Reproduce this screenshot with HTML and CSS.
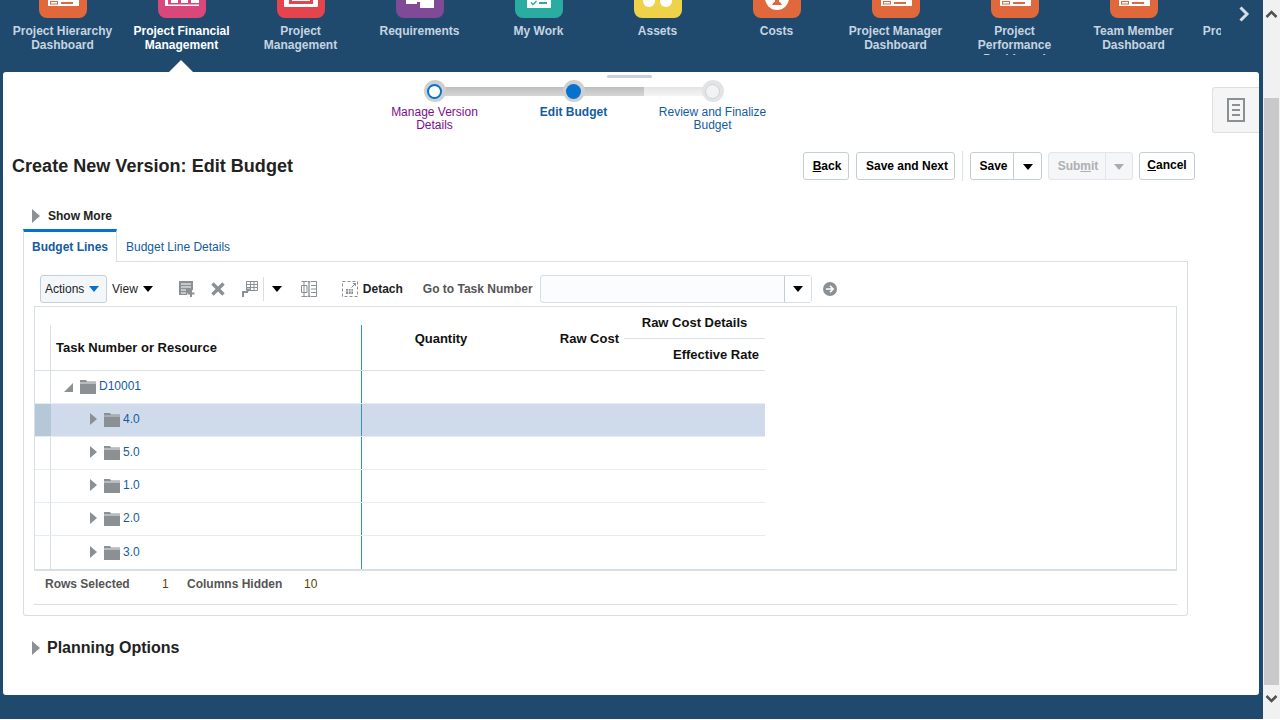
FILE: index.html
```html
<!DOCTYPE html>
<html lang="en">
<head>
  <meta charset="UTF-8" />
  <title>Create New Version: Edit Budget</title>
  <link rel="stylesheet" href="styles.css">
</head>
<body>

  <div class="app">
    <div class="main">

      <!-- springboard strip -->
      <header class="header">
        <nav class="nav">
          <a class="nav-item">
            <span class="tile tile-orange"><svg width="48" height="18" viewBox="0 0 48 18"><rect x="9" y="-2" width="31" height="8" fill="#fff"/><rect x="11.5" y="1.5" width="7" height="2.5" fill="none" stroke="#e0683a"/><rect x="22" y="2" width="12" height="2" fill="#e0683a"/></svg></span>
            <span class="nav-label">Project Hierarchy Dashboard</span>
          </a>
          <a class="nav-item active">
            <span class="tile tile-pink"><svg width="48" height="18" viewBox="0 0 48 18"><rect x="7" y="-2" width="34" height="8" fill="#fff"/><rect x="10" y="-2" width="3" height="6" fill="#d9487b"/><rect x="20" y="-2" width="3" height="6" fill="#d9487b"/><rect x="30" y="-2" width="3" height="6" fill="#d9487b"/><rect x="10" y="3" width="31" height="1.5" fill="#d9487b"/></svg></span>
            <span class="nav-label">Project Financial Management</span>
          </a>
          <a class="nav-item">
            <span class="tile tile-red"><svg width="48" height="18" viewBox="0 0 48 18"><rect x="7" y="-2" width="34" height="9" rx="1" fill="#fff"/><rect x="12" y="-2" width="24" height="6" fill="#e5444f"/><rect x="15" y="-2" width="18" height="3" fill="#fff"/></svg></span>
            <span class="nav-label">Project Management</span>
          </a>
          <a class="nav-item">
            <span class="tile tile-purple"><svg width="48" height="18" viewBox="0 0 48 18"><rect x="10" y="-2" width="11" height="6" fill="#fff"/><rect x="24" y="-2" width="14" height="10" fill="#fff"/><rect x="21" y="0" width="3" height="2" fill="#fff"/></svg></span>
            <span class="nav-label">Requirements</span>
          </a>
          <a class="nav-item">
            <span class="tile tile-teal"><svg width="48" height="18" viewBox="0 0 48 18"><rect x="12" y="-2" width="24" height="10" fill="#fff"/><path d="M16 2.5l2 2 3.5-3.5" fill="none" stroke="#2aaca0" stroke-width="1.5"/><rect x="24" y="2" width="8" height="2" fill="#2aaca0"/></svg></span>
            <span class="nav-label">My Work</span>
          </a>
          <a class="nav-item">
            <span class="tile tile-yellow"><svg width="48" height="18" viewBox="0 0 48 18"><circle cx="15" cy="1" r="6" fill="#fff"/><circle cx="32" cy="1" r="6" fill="#fff"/></svg></span>
            <span class="nav-label">Assets</span>
          </a>
          <a class="nav-item">
            <span class="tile tile-orange"><svg width="48" height="18" viewBox="0 0 48 18"><circle cx="24" cy="-2" r="12" fill="#fff"/><path d="M19 5l2-3h1V0h4v2h1l2 3z" fill="#e0683a"/></svg></span>
            <span class="nav-label">Costs</span>
          </a>
          <a class="nav-item">
            <span class="tile tile-orange"><svg width="48" height="18" viewBox="0 0 48 18"><rect x="9" y="-2" width="31" height="8" fill="#fff"/><rect x="11.5" y="1.5" width="7" height="2.5" fill="none" stroke="#e0683a"/><rect x="22" y="2" width="12" height="2" fill="#e0683a"/></svg></span>
            <span class="nav-label">Project Manager Dashboard</span>
          </a>
          <a class="nav-item">
            <span class="tile tile-orange"><svg width="48" height="18" viewBox="0 0 48 18"><rect x="9" y="-2" width="31" height="8" fill="#fff"/><rect x="11.5" y="1.5" width="7" height="2.5" fill="none" stroke="#e0683a"/><rect x="22" y="2" width="12" height="2" fill="#e0683a"/></svg></span>
            <span class="nav-label">Project Performance Dashboard</span>
          </a>
          <a class="nav-item">
            <span class="tile tile-orange"><svg width="48" height="18" viewBox="0 0 48 18"><rect x="9" y="-2" width="31" height="8" fill="#fff"/><rect x="11.5" y="1.5" width="7" height="2.5" fill="none" stroke="#e0683a"/><rect x="22" y="2" width="12" height="2" fill="#e0683a"/></svg></span>
            <span class="nav-label">Team Member Dashboard</span>
          </a>
          <a class="nav-item">
            <span class="tile tile-none"></span>
            <span class="nav-label">Project Hierarchy Dashboard</span>
          </a>
        </nav>
        <svg class="nav-next" width="12" height="16" viewBox="0 0 12 16"><path d="M2.5 1.5L9 8l-6.5 6.5" fill="none" stroke="#d5dde5" stroke-width="3"/></svg>
        <span class="nav-pointer"></span>
      </header>

      <div class="panel">
        <span class="grip"></span>

        <aside class="side-tab">
          <svg width="18" height="24" viewBox="0 0 18 24"><rect x="1" y="1" width="16" height="22" fill="none" stroke="#8b9094" stroke-width="2"/><path d="M5 7h8M5 12h8M5 17h8" stroke="#8b9094" stroke-width="2"/></svg>
        </aside>

        <!-- train stops -->
        <div class="train">
          <div class="train-track"><span class="train-done"></span></div>
          <div class="stop">
            <span class="stop-dot"><span class="dot-visited"></span></span>
            <span class="stop-label visited">Manage Version Details</span>
          </div>
          <div class="stop">
            <span class="stop-dot"><span class="dot-current"></span></span>
            <span class="stop-label current">Edit Budget</span>
          </div>
          <div class="stop">
            <span class="stop-dot stop-dot-next"><span class="dot-next"></span></span>
            <span class="stop-label">Review and Finalize Budget</span>
          </div>
        </div>

        <div class="page-head">
          <h1 class="page-title">Create New Version: Edit Budget</h1>
          <div class="actions">
            <button class="btn btn-back"><u>B</u>ack</button>
            <button class="btn btn-next">Save and Next</button>
            <span class="actions-sep"></span>
            <div class="split">
              <button class="btn-part btn-save">Save</button>
              <button class="btn-part btn-drop"><span class="caret caret-black"></span></button>
            </div>
            <div class="split split-off">
              <button class="btn-part btn-submit">Sub<u>m</u>it</button>
              <button class="btn-part btn-drop-off"><span class="caret caret-off"></span></button>
            </div>
            <button class="btn btn-cancel"><u>C</u>ancel</button>
          </div>
        </div>

        <div class="show-more"><span class="disclose"></span>Show More</div>

        <div class="tabs">
          <a class="tab tab-on">Budget Lines</a>
          <a class="tab">Budget Line Details</a>
        </div>

        <section class="tab-body">
          <div class="toolbar">
            <button class="tb-actions">Actions<span class="caret caret-blue"></span></button>
            <span class="tb-view">View<span class="caret caret-black"></span></span>

            <svg class="ic ic-add" width="16" height="16" viewBox="0 0 16 16"><path d="M0 0h14v9h-3v3H8v2H0z" fill="#8b9094"/><path d="M2 3h10M2 6h10M2 9h5M2 12h5" stroke="#fff"/><path d="M12 9v7M8.500 12.500h7" stroke="#8b9094" stroke-width="2"/></svg>
            <svg class="ic ic-del" width="14" height="14" viewBox="0 0 14 14"><path d="M1.500 1.500l11 11M12.500 1.500l-11 11" stroke="#8b9094" stroke-width="3.400"/></svg>
            <svg class="ic ic-freeze" width="16" height="16" viewBox="0 0 16 16"><path d="M4.500.5h11v9h-11zM4.500 3.500h11M4.500 6.500h11M8.500.5v9M12 .5v9" fill="none" stroke="#8b9094"/><path d="M1 16v-5h5" fill="none" stroke="#8b9094" stroke-width="2"/><path d="M4 7.500h4.500L6 11z" fill="#8b9094"/></svg>
            <span class="tb-sep"></span>
            <span class="caret caret-black tb-more"></span>
            <svg class="ic ic-wrap" width="16" height="16" viewBox="0 0 16 16"><path d="M.5.500h5.500M.5 15.500h5.500M3 .5v15M.5 4.500H6v7H.5zM10 .5h5.500v15H10M10 4.500h5.500M10 8h5.500M10 11.500h5.500" fill="none" stroke="#8b9094"/><path d="M7 0h2v16H7z" fill="#fff"/><path d="M6.500.5h3M6.500 15.500h3M8 .5v15" fill="none" stroke="#8b9094" stroke-width="1.300"/></svg>
            <svg class="ic ic-detach" width="16" height="16" viewBox="0 0 16 16"><rect x=".5" y=".5" width="15" height="15" fill="none" stroke="#8b9094" stroke-dasharray="3 2"/><path d="M4 8h7v5H4z" fill="#8b9094"/><path d="M4 10h7M6.500 8v5M9 8v5" stroke="#fff" stroke-width=".7"/><path d="M9.500 6.500l4-4M11 2.500h2.500V5" fill="none" stroke="#8b9094"/></svg>
            <span class="tb-detach">Detach</span>

            <span class="tb-goto">Go to Task Number</span>
            <div class="combo">
              <span class="combo-field"></span>
              <span class="combo-drop"><span class="caret caret-black"></span></span>
            </div>
            <svg class="ic ic-go" width="14" height="14" viewBox="0 0 14 14"><circle cx="7" cy="7" r="7" fill="#8b9094"/><path d="M3 7h7M7 3.800L10.200 7 7 10.200" fill="none" stroke="#fff" stroke-width="1.600"/></svg>
          </div>

          <div class="grid-frame">
            <div class="grid-head">
              <div class="head-rowhead"></div>
              <div class="head-tree">Task Number or Resource</div>
              <div class="head-cols">
                <div class="head-qty">Quantity</div>
                <div class="head-raw">Raw Cost</div>
                <div class="head-group">
                  <div class="group-title">Raw Cost Details</div>
                  <div class="group-sub">Effective Rate</div>
                </div>
              </div>
            </div>

            <div class="grid-row">
              <div class="row-head"></div>
              <div class="row-tree">
                <span class="twisty-open"></span>
                <svg class="folder" width="16" height="14" viewBox="0 0 16 14"><path d="M0 2V0h6l1 1.500h9V14H0z" fill="#8b9094"/><path d="M0 3h16" stroke="#fff" stroke-width=".8"/></svg>
                <a class="node">D10001</a>
              </div>
              <div class="row-rest"></div>
            </div>
            <div class="grid-row row-sel">
              <div class="row-head"></div>
              <div class="row-tree child">
                <span class="twisty"></span>
                <svg class="folder" width="16" height="14" viewBox="0 0 16 14"><path d="M0 2V0h6l1 1.500h9V14H0z" fill="#8b9094"/><path d="M0 3h16" stroke="#cfdbeb" stroke-width=".8"/></svg>
                <a class="node">4.0</a>
              </div>
              <div class="row-rest"></div>
            </div>
            <div class="grid-row">
              <div class="row-head"></div>
              <div class="row-tree child">
                <span class="twisty"></span>
                <svg class="folder" width="16" height="14" viewBox="0 0 16 14"><path d="M0 2V0h6l1 1.500h9V14H0z" fill="#8b9094"/><path d="M0 3h16" stroke="#fff" stroke-width=".8"/></svg>
                <a class="node">5.0</a>
              </div>
              <div class="row-rest"></div>
            </div>
            <div class="grid-row">
              <div class="row-head"></div>
              <div class="row-tree child">
                <span class="twisty"></span>
                <svg class="folder" width="16" height="14" viewBox="0 0 16 14"><path d="M0 2V0h6l1 1.500h9V14H0z" fill="#8b9094"/><path d="M0 3h16" stroke="#fff" stroke-width=".8"/></svg>
                <a class="node">1.0</a>
              </div>
              <div class="row-rest"></div>
            </div>
            <div class="grid-row">
              <div class="row-head"></div>
              <div class="row-tree child">
                <span class="twisty"></span>
                <svg class="folder" width="16" height="14" viewBox="0 0 16 14"><path d="M0 2V0h6l1 1.500h9V14H0z" fill="#8b9094"/><path d="M0 3h16" stroke="#fff" stroke-width=".8"/></svg>
                <a class="node">2.0</a>
              </div>
              <div class="row-rest"></div>
            </div>
            <div class="grid-row">
              <div class="row-head"></div>
              <div class="row-tree child">
                <span class="twisty"></span>
                <svg class="folder" width="16" height="14" viewBox="0 0 16 14"><path d="M0 2V0h6l1 1.500h9V14H0z" fill="#8b9094"/><path d="M0 3h16" stroke="#fff" stroke-width=".8"/></svg>
                <a class="node">3.0</a>
              </div>
              <div class="row-rest"></div>
            </div>
          </div>

          <div class="status">
            <span class="status-label status-rows">Rows Selected</span>
            <span class="status-value status-one">1</span>
            <span class="status-label status-cols">Columns Hidden</span>
            <span class="status-value">10</span>
          </div>
        </section>

        <div class="planning"><span class="disclose"></span>Planning Options</div>
      </div>
    </div>

    <div class="scrollbar">
      <svg class="scroll-arrow" width="13" height="8" viewBox="0 0 13 8"><path d="M1.500 7l5-5 5 5" fill="none" stroke="#505050" stroke-width="2.500"/></svg>
      <div class="scroll-thumb"></div>
      <svg class="scroll-arrow" width="13" height="8" viewBox="0 0 13 8"><path d="M1.500 1l5 5 5-5" fill="none" stroke="#505050" stroke-width="2.500"/></svg>
    </div>
  </div>

</body>
</html>
```

FILE: styles.css
```css
* {
  box-sizing: border-box;
}

body {
  margin: 0;
  padding: 0;
  background-color: #fff;
  font-family: "Liberation Sans", Arial, sans-serif;
  font-size: 12px;
  color: #222;
  overflow: hidden;
}

.app {
  display: flex;
  height: 719px;
}

.main {
  width: 1263px;
  background-color: #1f4a6e;
}

/* header */

.header {
  position: relative;
  height: 72px;
  padding-left: 3px;
}

.nav {
  display: flex;
  width: 1218px;
  height: 55px;
  overflow: hidden;
}

.nav-item {
  flex: 0 0 119px;
  display: flex;
  flex-direction: column;
  align-items: center;
  padding: 0 7px;
  color: #c6d4e0;
  font-weight: bold;
  line-height: 14px;
  text-align: center;
}

.nav-item.active {
  color: #fff;
}

.tile {
  display: block;
  flex: none;
  width: 48px;
  height: 18px;
  margin-bottom: 6px;
  border-radius: 0 0 8px 8px;
  overflow: hidden;
}

.tile svg {
  display: block;
}

.tile-orange { background-color: #e0683a; }
.tile-pink { background-color: #d9487b; }
.tile-red { background-color: #e5444f; }
.tile-purple { background-color: #7f4a96; }
.tile-teal { background-color: #2aaca0; }
.tile-yellow { background-color: #eed24a; }
.tile-none { background: none; }

.nav-next {
  position: absolute;
  top: 6px;
  left: 1238px;
}

.nav-pointer {
  position: absolute;
  left: 169px;
  top: 60px;
  border-left: 12px solid transparent;
  border-right: 12px solid transparent;
  border-bottom: 12px solid #fff;
}

/* panel */

.panel {
  position: relative;
  width: 1256px;
  height: 623px;
  margin-left: 3px;
  background-color: #fff;
  border-radius: 3px;
  overflow: hidden;
}

.grip {
  position: absolute;
  left: 604px;
  top: 3px;
  width: 45px;
  height: 3px;
  border-radius: 2px;
  background-color: #c9d0de;
}

.side-tab {
  position: absolute;
  left: 1209px;
  top: 15px;
  width: 47px;
  height: 46px;
  display: flex;
  align-items: center;
  justify-content: center;
  background-color: #f5f5f5;
  border: 1px solid #dfdfdf;
  border-right: none;
  border-radius: 3px 0 0 3px;
}

/* train */

.train {
  position: relative;
  display: grid;
  grid-template-columns: repeat(3, 139px);
  width: 417px;
  margin-left: 362px;
  padding-top: 8px;
  height: 80px;
}

.train-track {
  position: absolute;
  left: 70px;
  top: 15px;
  width: 278px;
  height: 9px;
  background: linear-gradient(#e4e4e4, #f4f4f4);
}

.train-done {
  display: block;
  width: 209px;
  height: 9px;
  background: linear-gradient(#bdbdbd, #d6d6d6);
}

.stop {
  position: relative;
  display: flex;
  flex-direction: column;
  align-items: center;
}

.stop-dot {
  display: flex;
  align-items: center;
  justify-content: center;
  width: 22px;
  height: 22px;
  border-radius: 50%;
  background-color: #cfcfcf;
}

.stop-dot-next {
  background-color: #e4e4e4;
}

.dot-visited {
  width: 15px;
  height: 15px;
  border-radius: 50%;
  background-color: #fff;
  border: 2px solid #0572ce;
}

.dot-current {
  width: 15px;
  height: 15px;
  border-radius: 50%;
  background-color: #0572ce;
}

.dot-next {
  width: 15px;
  height: 15px;
  border-radius: 50%;
  background-color: #f2f2f2;
  border: 1px solid #c8d4e0;
}

.stop-label {
  width: 112px;
  margin-top: 4px;
  line-height: 13px;
  text-align: center;
  color: #145c9e;
}

.stop-label.visited {
  color: #7a0f8c;
}

.stop-label.current {
  font-weight: bold;
}

/* title row */

.page-head {
  display: flex;
  align-items: center;
  justify-content: space-between;
  height: 28px;
  padding: 0 64px 0 9px;
}

.page-title {
  margin: 0;
  font-size: 18px;
  font-weight: bold;
  letter-spacing: 0.03px;
  color: #222;
}

.actions {
  display: flex;
  align-items: stretch;
  height: 28px;
}

.btn,
.btn-part {
  font-family: inherit;
  font-size: 12px;
  font-weight: bold;
  color: #000;
  background-color: #fff;
  padding: 0;
}

.btn {
  border: 1px solid #c4ced7;
  border-radius: 3px;
}

.btn-back { width: 46px; padding-left: 2px; }
.btn-next { width: 99px; margin-left: 7px; padding-left: 3px; }
.btn-cancel { width: 56px; margin-left: 6px; padding-bottom: 3px; }

.actions-sep {
  width: 1px;
  height: 30px;
  margin: -1px 7px 0 7px;
  background-color: #dde3e8;
}

.split {
  display: flex;
  width: 72px;
  border: 1px solid #c4ced7;
  border-radius: 3px;
}

.split-off {
  width: 85px;
  margin-left: 6px;
  background-color: #f5f6f7;
  border-color: #e2e6ea;
}

.btn-part {
  border: none;
  background: none;
}

.btn-save { width: 43px; padding-left: 3px; border-right: 1px solid #c4ced7; }
.btn-drop { flex: 1; }

.btn-submit {
  width: 57px;
  padding-left: 2px;
  color: #acb0b4;
  border-right: 1px solid #e2e6ea;
}

.btn-drop-off { flex: 1; }

.caret {
  display: inline-block;
  border-left: 5px solid transparent;
  border-right: 5px solid transparent;
  border-top: 6px solid #000;
}

.caret-off { border-top-color: #a9adb1; }
.caret-blue { border-top-color: #0572ce; }

/* disclosure rows */

.show-more {
  display: flex;
  align-items: center;
  height: 20px;
  margin: 26px 0 0 29px;
  font-weight: bold;
  color: #222;
}

.disclose {
  flex: none;
  border-top: 7px solid transparent;
  border-bottom: 7px solid transparent;
  border-left: 8px solid #8b9094;
  margin-right: 8px;
}

.planning {
  display: flex;
  align-items: center;
  height: 24px;
  margin: 20px 0 0 29px;
  font-size: 16px;
  font-weight: bold;
  color: #222;
}

.planning .disclose {
  margin-right: 7px;
}

/* tabs */

.tabs {
  display: flex;
  height: 33px;
  margin: 3px 71px 0 20px;
  border-bottom: 1px solid #d6dfe6;
}

.tab {
  padding: 0 9px;
  height: 33px;
  line-height: 30px;
  border-top: 3px solid transparent;
  color: #145c9e;
}

.tab-on {
  width: 94px;
  font-weight: bold;
  background-color: #fff;
  border-top-color: #0572ce;
  border-left: 1px solid #d6dfe6;
  border-right: 1px solid #d6dfe6;
  padding: 0 8px;
}

.tab-body {
  width: 1165px;
  height: 354px;
  margin-left: 20px;
  padding: 13px 10px 0 10px;
  border: 1px solid #d6dfe6;
  border-top: none;
  border-radius: 0 0 3px 3px;
}

/* toolbar */

.toolbar {
  display: flex;
  align-items: center;
  height: 28px;
  margin: 0 0 3px 6px;
}

.tb-actions {
  display: flex;
  align-items: center;
  width: 67px;
  height: 28px;
  padding: 0 0 0 4px;
  font-family: inherit;
  font-size: 12px;
  color: #222;
  background-color: #f3f7fa;
  border: 1px solid #c4ced7;
  border-radius: 3px;
}

.tb-actions .caret {
  margin-left: 5px;
}

.tb-view {
  display: flex;
  align-items: center;
  margin-left: 5px;
  color: #222;
}

.tb-view .caret {
  margin-left: 5px;
}

.ic {
  flex: none;
}

.ic-add { margin-left: 26px; }
.ic-del { margin-left: 16px; }
.ic-freeze { margin-left: 17px; }

.tb-sep {
  width: 1px;
  height: 24px;
  margin-left: 5px;
  background-color: #d6dfe6;
}

.tb-more { margin-left: 8px; }
.ic-wrap { margin-left: 19px; }
.ic-detach { margin-left: 25px; }

.tb-detach {
  margin-left: 5px;
  font-weight: bold;
  color: #222;
}

.tb-goto {
  margin-left: 20px;
  font-weight: bold;
  color: #555;
}

.combo {
  display: flex;
  width: 272px;
  height: 28px;
  margin-left: 7px;
  border: 1px solid #d6dfe6;
  border-radius: 3px;
  background-color: #fbfcfe;
}

.combo-field {
  flex: 1;
}

.combo-drop {
  display: flex;
  align-items: center;
  justify-content: center;
  width: 27px;
  background-color: #fff;
  border-left: 1px solid #c4ced7;
}

.ic-go { margin-left: 11px; }

/* tree table */

.grid-frame {
  height: 265px;
  border: 1px solid #d6dfe6;
  border-bottom-width: 2px;
}

.grid-head {
  display: flex;
  height: 64px;
  border-bottom: 1px solid #d6dfe6;
  width: 730px;
  font-size: 13px;
  font-weight: bold;
  color: #111;
}

.head-rowhead {
  width: 16px;
  margin-top: 18px;
  border-right: 1px solid #d6dfe6;
}

.head-tree {
  display: flex;
  align-items: center;
  width: 311px;
  margin-top: 18px;
  padding-left: 5px;
  border-right: 1px solid #2e97b8;
}

.head-cols {
  display: flex;
  width: 403px;
}

.head-qty {
  display: flex;
  align-items: center;
  justify-content: center;
  width: 158px;
}

.head-raw {
  display: flex;
  align-items: center;
  justify-content: flex-end;
  width: 104px;
  padding-right: 5px;
}

.head-group {
  width: 141px;
}

.group-title {
  height: 32px;
  line-height: 31px;
  text-align: center;
  border-bottom: 1px solid #d6dfe6;
}

.group-sub {
  line-height: 31px;
  text-align: right;
  padding-right: 6px;
}

.grid-row {
  display: flex;
  height: 33px;
  width: 730px;
  border-bottom: 1px solid #e6ebef;
}

.grid-row:last-child {
  border-bottom: none;
}

.row-head {
  width: 16px;
  border-right: 1px solid #d6dfe6;
}

.row-tree {
  display: flex;
  align-items: center;
  width: 311px;
  padding: 0 0 2px 13px;
  border-right: 1px solid #2e97b8;
}

.row-tree.child {
  padding-left: 39px;
}

.row-rest {
  flex: 1;
}

.row-sel {
  background-color: #cfdbeb;
}

.row-sel .row-head {
  background-color: #b5c8d8;
  border-right-color: #b5c8d8;
}

.twisty {
  border-top: 6px solid transparent;
  border-bottom: 6px solid transparent;
  border-left: 7px solid #8b9094;
  margin-right: 7px;
}

.twisty-open {
  width: 0;
  height: 0;
  border-left: 9px solid transparent;
  border-bottom: 9px solid #8b9094;
  margin: 2px 7px 0 0;
}

.folder {
  margin: 2px 3px 0 0;
}

.node {
  color: #145c9e;
}

/* status line */

.status {
  display: flex;
  align-items: center;
  height: 34px;
  padding: 0 0 7px 11px;
  border-bottom: 1px solid #d6dfe6;
  color: #555;
}

.status-label {
  font-weight: bold;
}

.status-rows { width: 117px; }
.status-one { width: 25px; }
.status-cols { width: 117px; }

.status-value {
  color: #5c4400;
}

/* browser scrollbar */

.scrollbar {
  width: 17px;
  display: flex;
  flex-direction: column;
  align-items: center;
  background-color: #f1f1f1;
}

.scroll-arrow {
  flex: none;
  margin: 10px 0;
}

.scroll-thumb {
  width: 15px;
  height: 587px;
  margin-top: 70px;
  background-color: #c9c9c9;
}
```
